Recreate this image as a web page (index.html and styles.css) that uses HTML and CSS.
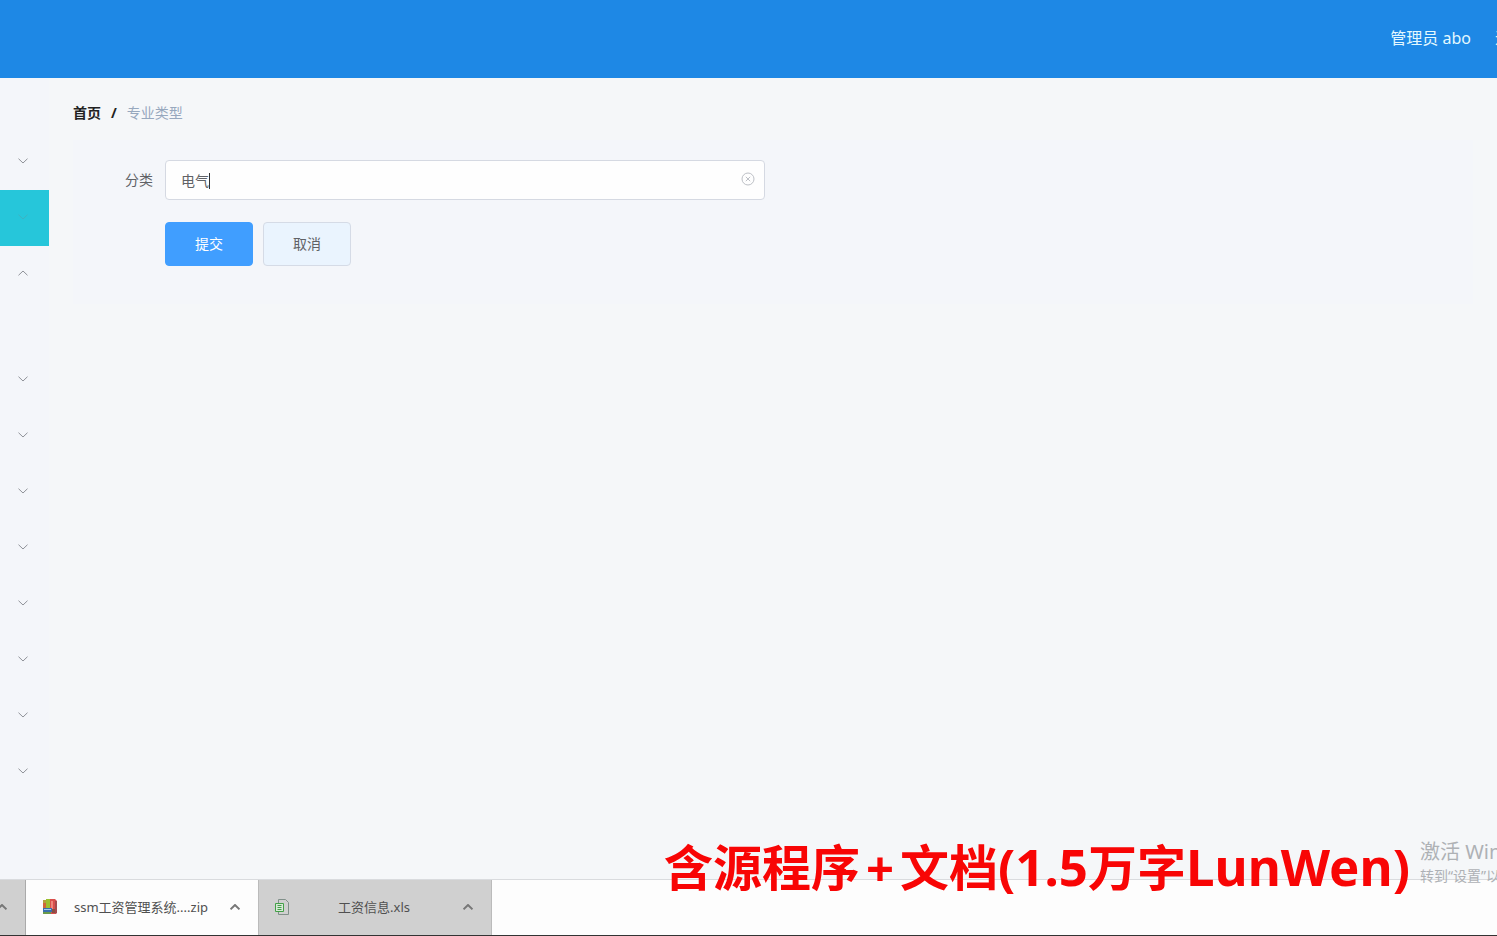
FILE: index.html
```html
<!DOCTYPE html>
<html lang="zh-CN">
<head>
<meta charset="utf-8">
<title>专业类型</title>
<link rel="stylesheet" href="styles.css">
</head>
<body>
<svg class="defs" aria-hidden="true">
  <symbol id="down" viewBox="0 0 10 6"><path d="M.5.7 5 5 9.500.7" fill="none" stroke="currentColor"/></symbol>
  <symbol id="up" viewBox="0 0 10 6"><path d="M.5 5.300 5 1l4.500 4.300" fill="none" stroke="currentColor"/></symbol>
</svg>
<div class="app">
  <header class="topbar">
    <span class="user">管理员 abo</span>
    <a class="logout" href="#">退出登录</a>
  </header>
  <div class="body">
    <nav class="sidebar" aria-label="菜单">
      <button class="menu-item" aria-label="菜单 1"><svg><use href="#down"/></svg></button>
      <button class="menu-item active" aria-label="菜单 2"><svg><use href="#down"/></svg></button>
      <button class="menu-item" aria-label="菜单 3"><svg><use href="#up"/></svg></button>
      <div class="submenu"></div>
      <button class="menu-item" aria-label="菜单 4"><svg><use href="#down"/></svg></button>
      <button class="menu-item" aria-label="菜单 5"><svg><use href="#down"/></svg></button>
      <button class="menu-item" aria-label="菜单 6"><svg><use href="#down"/></svg></button>
      <button class="menu-item" aria-label="菜单 7"><svg><use href="#down"/></svg></button>
      <button class="menu-item" aria-label="菜单 8"><svg><use href="#down"/></svg></button>
      <button class="menu-item" aria-label="菜单 9"><svg><use href="#down"/></svg></button>
      <button class="menu-item" aria-label="菜单 10"><svg><use href="#down"/></svg></button>
      <button class="menu-item" aria-label="菜单 11"><svg><use href="#down"/></svg></button>
    </nav>
    <main class="content">
      <div class="breadcrumb">
        <a class="home" href="#">首页</a><span class="slash">/</span><span class="current">专业类型</span>
      </div>
      <form class="form">
        <div class="row">
          <label class="label" for="category">分类</label>
          <div class="field">
            <input id="category" class="input" type="text" value="电气">
            <span class="caret"></span>
            <button class="clear" type="button" aria-label="清空">
              <svg viewBox="0 0 14 14" fill="none" stroke="currentColor"><circle cx="7" cy="7" r="6"/><path d="m4.800 4.800 4.400 4.400m0-4.400L4.800 9.200"/></svg>
            </button>
          </div>
        </div>
        <div class="actions">
          <button class="btn primary" type="button">提交</button>
          <button class="btn" type="button">取消</button>
        </div>
      </form>
    </main>
  </div>
  <footer class="downloads">
    <button class="more" aria-label="更多"><svg><use href="#up"/></svg></button>
    <div class="download">
      <svg class="file" viewBox="0 0 16 16">
        <path d="M1 1h4v8H1z" fill="#d0673a"/><path d="M4 0h5v9H4z" fill="#9cc02f"/><path d="M1 1h3v3H1z" fill="#b3a13a"/>
        <path d="M8 0h5l2 2v12l-2 1H8z" fill="#d94f4c"/><path d="M9 2h2v8H9z" fill="#f0867a"/><path d="M13 2h2v12l-2 1z" fill="#a54a4d"/>
        <path d="M1 9h9v4H1z" fill="#3a6fae"/><path d="M2 10h7v1H2z" fill="#a4cce4"/><path d="M1 13h8v2H1z" fill="#6a9a4a"/><path d="M10 10h3v4h-3z" fill="#875045"/>
      </svg>
      <span class="name">ssm工资管理系统....zip</span>
      <button class="toggle" aria-label="选项"><svg><use href="#up"/></svg></button>
    </div>
    <div class="download shaded">
      <svg class="file" viewBox="0 0 16 16" fill="none">
        <path d="M3.500 4V.5h7l3 3v12h-10V13" stroke="#81908a"/><path d="M.5 4.500h8v8h-8z" fill="#d8e8d8" stroke="#43a047"/><path d="M2.500 6.500h4M2.500 8.500h4M2.500 10.500h4" stroke="#43a047"/>
      </svg>
      <span class="name">工资信息.xls</span>
      <button class="toggle" aria-label="选项"><svg><use href="#up"/></svg></button>
    </div>
  </footer>
  <div class="caption">含源程序<span class="plus">+</span>文档<span class="latin">(1.5</span>万字<span class="latin">LunWen)</span></div>
  <div class="activate"><div class="activate-title">激活 Windows</div><div>转到“设置”以激活 Windows。</div></div>
</div>
</body>
</html>
```
FILE: styles.css
```css
* { box-sizing: border-box; }
body {
  margin: 0;
  font: 14px/20px "Noto Sans", "Noto Sans CJK SC", sans-serif;
  color: #606266;
}
button, input { font: inherit; color: inherit; margin: 0; }
button { padding: 0; border: 0; background: none; }
a { color: inherit; text-decoration: none; }
.defs { position: absolute; width: 0; height: 0; }
.app {
  position: relative;
  display: flex;
  flex-direction: column;
  min-height: 100vh;
  overflow: hidden;
  background: #f5f7f9;
}
.topbar {
  display: flex;
  justify-content: flex-end;
  align-items: center;
  gap: 24px;
  height: 78px;
  padding-bottom: 2px;
  background: #1e88e5;
  color: #e3f8ff;
  font-size: 16px;
  white-space: nowrap;
}
.logout { width: 2px; }
.body { display: flex; flex: 1; }
.sidebar {
  display: flex;
  flex-direction: column;
  width: 49px;
  padding-top: 56px;
  background: #f4f6fa;
}
.menu-item {
  display: flex;
  align-items: center;
  height: 56px;
  padding: 0 0 2px 18px;
  color: #8f9298;
}
.menu-item svg, .more svg, .toggle svg { width: 10px; height: 6px; }
.active { background: #26c6da; color: #3eb3c1; }
.submenu { height: 50px; }
.content { flex: 1; padding: 25px 24px; }
.breadcrumb { display: flex; gap: 10px; color: #97a8be; }
.home, .slash { color: #222; font-weight: 700; }
.form { margin-top: 17px; padding: 20px 0 38px; background: #f4f6fa; }
.row { display: flex; align-items: center; gap: 12px; }
.label { width: 80px; text-align: right; }
.field { position: relative; width: 600px; }
.input {
  display: block;
  width: 100%;
  height: 40px;
  padding: 0 40px 0 15px;
  border: 1px solid #d5d9e2;
  border-radius: 4px;
  background: #fefefe;
  outline: none;
}
.caret { position: absolute; left: 44px; top: 13px; width: 1px; height: 16px; background: #333; }
.clear { position: absolute; right: 10px; top: 12px; width: 14px; height: 14px; color: #bdc0c6; }
.clear svg { display: block; }
.actions { display: flex; gap: 10px; margin: 22px 0 0 92px; }
.btn {
  width: 88px;
  height: 44px;
  border: 1px solid #d5dbe6;
  border-radius: 4px;
  background: #eaf4fe;
}
.primary { border-color: #409eff; background: #409eff; color: #fff; }
.downloads {
  display: flex;
  height: 57px;
  border-top: 1px solid #d9dbde;
  border-bottom: 1px solid #333;
  background: #fdfdfd;
  font-size: 13px;
  color: #505050;
}
.more { width: 26px; padding-bottom: 2px; border-right: 1px solid #aaa; background: #d0d0d0; color: #777; }
.more svg { display: block; margin-left: -3px; }
.download {
  display: flex;
  align-items: center;
  width: 233px;
  padding: 0 18px 2px 16px;
  border-right: 1px solid #bbb;
}
.shaded { background: #d0d0d0; }
.file { width: 16px; height: 16px; }
.name { flex: 1; padding-left: 16px; white-space: nowrap; }
.shaded .name { padding: 0 6px 0 0; text-align: center; }
.toggle { display: flex; color: #777; }
.more svg, .toggle svg { stroke-width: 2px; }
.caption {
  position: absolute;
  right: 87px;
  bottom: 33px;
  font-size: 49px;
  line-height: 72px;
  font-weight: 700;
  color: #f80505;
  white-space: nowrap;
}
.latin { font-size: 51px; }
.plus { padding: 0 6px; }
.activate {
  position: absolute;
  left: calc(100% - 77px);
  bottom: 50px;
  color: #aeb1b5;
  white-space: nowrap;
}
.activate-title { font-size: 20px; line-height: 28px; }
```
